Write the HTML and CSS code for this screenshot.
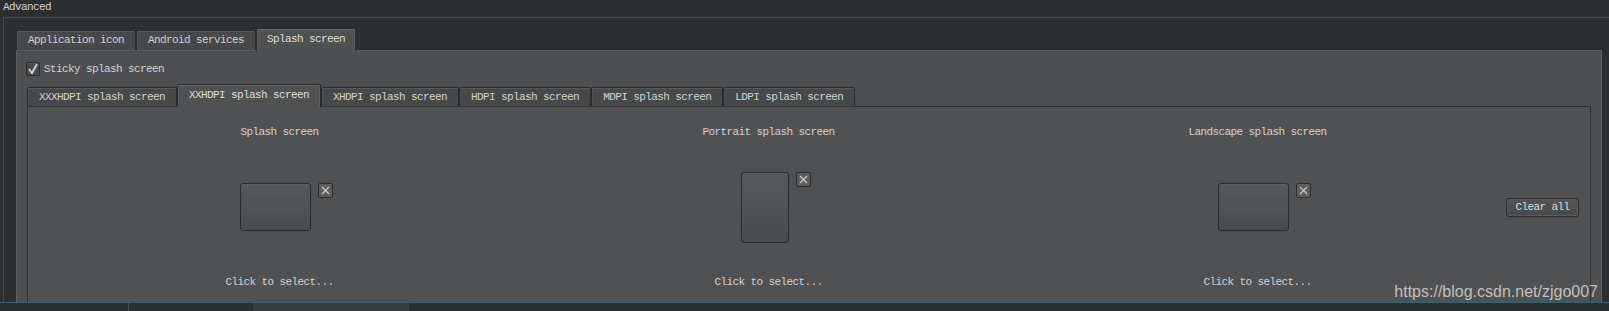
FILE: index.html
```html
<!DOCTYPE html>
<html lang="en">
<head>
  <meta charset="UTF-8" />
  <title>Advanced</title>
  <link rel="stylesheet" href="styles.css">
</head>
<body>

  <div class="dialog">
    <div class="group-title">Advanced</div>
    <div class="group-frame">

      <div class="tab-bar outer">
        <div class="tab">Application icon</div>
        <div class="tab">Android services</div>
        <div class="tab active">Splash screen</div>
      </div>

      <div class="pane">
        <label class="check">
          <span class="check-box">
            <svg width="12" height="12" viewBox="0 0 12 12"><polyline points="2,6 5,10 10,1" fill="none" stroke="#d0d0d0" stroke-width="2"/></svg>
          </span>
          Sticky splash screen
        </label>

        <div class="inner-tabs">
          <div class="tab-bar inner">
            <div class="tab">XXXHDPI splash screen</div>
            <div class="tab active">XXHDPI splash screen</div>
            <div class="tab">XHDPI splash screen</div>
            <div class="tab">HDPI splash screen</div>
            <div class="tab">MDPI splash screen</div>
            <div class="tab">LDPI splash screen</div>
          </div>

          <div class="inner-pane">
            <div class="label">Splash screen</div>
            <div class="label">Portrait splash screen</div>
            <div class="label">Landscape splash screen</div>
            <div class="spacer"></div>

            <div class="pic">
              <div class="thumb"></div>
              <div class="remove"><svg width="9" height="9" viewBox="0 0 9 9"><path d="M1 1L8 8M8 1L1 8" stroke="#c6c6c6" stroke-width="1.3"/></svg></div>
            </div>
            <div class="pic">
              <div class="thumb portrait"></div>
              <div class="remove"><svg width="9" height="9" viewBox="0 0 9 9"><path d="M1 1L8 8M8 1L1 8" stroke="#c6c6c6" stroke-width="1.3"/></svg></div>
            </div>
            <div class="pic">
              <div class="thumb"></div>
              <div class="remove"><svg width="9" height="9" viewBox="0 0 9 9"><path d="M1 1L8 8M8 1L1 8" stroke="#c6c6c6" stroke-width="1.3"/></svg></div>
            </div>
            <button class="btn-clear">Clear all</button>

            <div class="label">Click to select...</div>
            <div class="label">Click to select...</div>
            <div class="label">Click to select...</div>
          </div>
        </div>
      </div>

    </div>
  </div>

  <div class="status">
    <span class="status-sep"></span>
    <span class="status-box"></span>
  </div>

  <div class="watermark">https://blog.csdn.net/zjgo007</div>

</body>
</html>
```

FILE: styles.css
```css
* {
  box-sizing: border-box;
}
body {
  margin: 0;
  width: 1609px;
  height: 311px;
  overflow: hidden;
  position: relative;
  background-color: #2d2e30;
  font-family: "Liberation Mono", "DejaVu Sans Mono", monospace;
  font-size: 11px;
  letter-spacing: -0.6px;
  color: #d2d2d2;
}
.dialog {
  height: 302px;
  overflow: hidden;
}
.group-title {
  height: 17px;
  line-height: 14px;
  padding-left: 3px;
}
.group-frame {
  margin-left: 3px;
  border-top: 1px solid #46474a;
  border-left: 1px solid #46474a;
  padding: 10px 7px 0 12px;
}

/* tabs */
.tab-bar {
  display: flex;
  align-items: flex-end;
  height: 22px;
  position: relative;
  z-index: 1;
}
.tab {
  height: 20px;
  line-height: 18px;
  padding: 0 11px;
  border: 1px solid #2a2b2d;
  border-bottom: none;
  border-radius: 2px 2px 0 0;
  background-color: #47484a;
  box-shadow: inset 0 1px 0 #58595b, inset 1px 0 0 #515254;
  white-space: nowrap;
}
.tab.active {
  height: 23px;
  line-height: 20px;
  margin-bottom: -1px;
  background-color: #4f5052;
  color: #dedede;
  box-shadow: inset 0 1px 0 #67686a, inset 1px 0 0 #5c5d5f, inset -1px 0 0 #5c5d5f;
}
.outer .tab.active {
  padding: 0 10px;
}
.inner .tab {
  height: 19px;
  line-height: 19px;
}
.inner .tab.active {
  height: 23px;
  line-height: 21px;
  background-color: #505153;
}

.pane {
  border: 1px solid #5d5e60;
  background-color: #4e4f51;
  padding: 0 10px 0 9px;
}
.check {
  display: flex;
  align-items: center;
  gap: 4px;
  height: 14px;
  margin-top: 11px;
}
.check-box {
  width: 14px;
  height: 14px;
  border: 1px solid #2a2b2d;
  border-radius: 2px;
  background-color: #48494b;
  box-shadow: inset 0 1px 0 #5a5b5d;
  display: flex;
  align-items: center;
  justify-content: center;
}

.inner-tabs {
  margin-top: 8px;
  margin-left: 1px;
}
.inner-pane {
  height: 200px;
  border: 1px solid #313234;
  background-color: #505153;
  display: grid;
  grid-template-columns: repeat(3, 489px) auto;
  grid-template-rows: 14px 136px 14px;
  padding: 18px 0 0 7px;
}
.label {
  text-align: center;
  line-height: 14px;
  white-space: nowrap;
}
.pic {
  display: grid;
  grid-template-columns: minmax(0, 1fr) auto minmax(0, 1fr);
  align-self: center;
  padding-right: 8px;
}
.thumb {
  grid-column: 2;
  width: 71px;
  height: 48px;
  border: 1px solid #2a2b2d;
  border-radius: 3px;
  background: linear-gradient(#58595b, #4a4b4d);
  box-shadow: inset 0 1px 0 #5f6062;
}
.thumb.portrait {
  width: 48px;
  height: 71px;
}
.remove {
  grid-column: 3;
  justify-self: start;
  align-self: start;
  margin-left: 7px;
  width: 15px;
  height: 15px;
  border: 1px solid #2a2b2d;
  border-radius: 2px;
  background-color: #5c5d5f;
  display: flex;
  align-items: center;
  justify-content: center;
}
.btn-clear {
  align-self: center;
  margin-left: 4px;
  width: 73px;
  height: 19px;
  padding: 0;
  border: 1px solid #2a2b2d;
  border-radius: 3px;
  background: linear-gradient(#545557, #47484a);
  box-shadow: inset 0 0 0 1px #5a5b5d;
  font-family: inherit;
  font-size: 11px;
  letter-spacing: -0.6px;
  color: #dcdcdc;
  line-height: 17px;
}

/* bottom strip */
.status {
  height: 9px;
  border-top: 1px solid #2d6b71;
  display: flex;
}
.status-sep {
  width: 1px;
  margin-left: 128px;
  background-color: #4a4b4d;
}
.status-box {
  width: 156px;
  margin-left: 124px;
  background-color: #3a3b3e;
}

.watermark {
  position: absolute;
  right: 11px;
  top: 284px;
  font-family: "Liberation Sans", Arial, sans-serif;
  font-size: 16px;
  line-height: 16px;
  letter-spacing: 0;
  color: rgba(215, 215, 215, 0.85);
}
```
